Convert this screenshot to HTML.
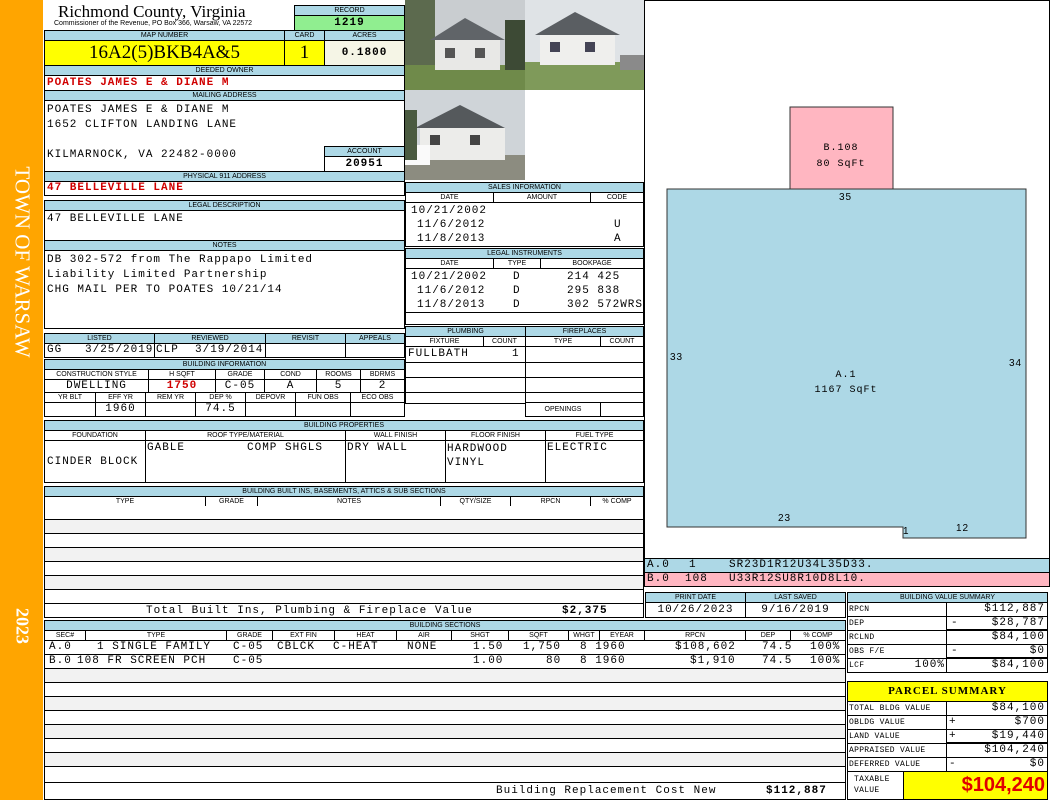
<!DOCTYPE html>
<html><head><meta charset="utf-8">
<style>
*{margin:0;padding:0}
body{width:1050px;height:800px;position:relative;background:#fff;overflow:hidden;font-family:"Liberation Mono",monospace;font-size:11px;letter-spacing:1px;color:#000}
.a{position:absolute;box-sizing:border-box}
.h{position:absolute;box-sizing:border-box;background:#add8e6;border:1px solid #000;font:7px/9px "Liberation Sans",sans-serif;letter-spacing:0;text-align:center;overflow:hidden;white-space:nowrap}
.c{position:absolute;box-sizing:border-box;border:1px solid #000;background:#fff;overflow:hidden;white-space:nowrap}
.ch{position:absolute;box-sizing:border-box;border:1px solid #000;background:#fff;font:7px/9px "Liberation Sans",sans-serif;letter-spacing:0;text-align:center;overflow:hidden;white-space:nowrap}
.r{color:#d00000;font-weight:bold}
.ce{text-align:center}.rt{text-align:right;padding-right:2px}
.row{position:absolute;box-sizing:border-box;border:1px solid #000;border-top:none;background:#fff}
.sm{font-size:8px;letter-spacing:0.3px;line-height:13px;padding-left:1px}
s{text-decoration:none;position:absolute}
</style></head><body>
<div class="a" style="left:0;top:0;width:43px;height:800px;background:#ffa500"></div>
<div class="a" style="left:22px;top:262px;width:0;height:0"><div style="position:absolute;transform:translate(-50%,-50%) rotate(90deg);font:21px 'Liberation Serif',serif;letter-spacing:0;color:#fff;white-space:nowrap">TOWN OF WARSAW</div></div>
<div class="a" style="left:22px;top:626px;width:0;height:0"><div style="position:absolute;transform:translate(-50%,-50%) rotate(90deg);font:bold 18px 'Liberation Serif',serif;letter-spacing:0;color:#fff;white-space:nowrap">2023</div></div>

<div class="a" style="left:58px;top:2px;font:17px 'Liberation Serif',serif;letter-spacing:0">Richmond County, Virginia</div>
<div class="a" style="left:54px;top:20px;font:7px 'Liberation Sans',sans-serif;letter-spacing:0">Commissioner of the Revenue, PO Box 366, Warsaw, VA 22572</div>
<div class="h" style="left:294px;top:5px;width:111px;height:11px">RECORD</div>
<div class="c ce" style="left:294px;top:15px;width:111px;height:16px;background:#90ee90;font-weight:bold;line-height:14px">1219</div>
<div class="h" style="left:44px;top:30px;width:241px;height:11px">MAP NUMBER</div>
<div class="h" style="left:284px;top:30px;width:41px;height:11px">CARD</div>
<div class="h" style="left:324px;top:30px;width:81px;height:11px">ACRES</div>
<div class="c ce" style="left:44px;top:40px;width:241px;height:26px;background:#ffff00;font:19px/24px 'Liberation Serif',serif;letter-spacing:0">16A2(5)BKB4A&amp;5</div>
<div class="c ce" style="left:284px;top:40px;width:41px;height:26px;background:#ffff00;font:19px/24px 'Liberation Serif',serif;letter-spacing:0">1</div>
<div class="c ce" style="left:324px;top:40px;width:81px;height:26px;background:#f5f5e6;font-weight:bold;line-height:24px">0.1800</div>
<div class="h" style="left:44px;top:65px;width:361px;height:11px">DEEDED OWNER</div>
<div class="c r" style="left:44px;top:75px;width:361px;height:16px;padding-left:2px;line-height:14px">POATES JAMES E &amp; DIANE M</div>
<div class="h" style="left:44px;top:90px;width:361px;height:11px">MAILING ADDRESS</div>
<div class="c" style="left:44px;top:100px;width:361px;height:72px;padding:2px 0 0 2px;line-height:15px">POATES JAMES E &amp; DIANE M<br>1652 CLIFTON LANDING LANE<br><br>KILMARNOCK, VA 22482-0000</div>
<div class="h" style="left:324px;top:146px;width:81px;height:11px">ACCOUNT</div>
<div class="c ce" style="left:324px;top:156px;width:81px;height:16px;font-weight:bold;line-height:14px">20951</div>
<div class="h" style="left:44px;top:171px;width:361px;height:11px">PHYSICAL 911 ADDRESS</div>
<div class="c r" style="left:44px;top:181px;width:361px;height:15px;padding-left:2px;line-height:13px">47 BELLEVILLE LANE</div>
<div class="h" style="left:44px;top:200px;width:361px;height:11px">LEGAL DESCRIPTION</div>
<div class="c" style="left:44px;top:210px;width:361px;height:31px;padding:2px 0 0 2px">47 BELLEVILLE LANE</div>
<div class="h" style="left:44px;top:240px;width:361px;height:11px">NOTES</div>
<div class="c" style="left:44px;top:250px;width:361px;height:79px;padding:2px 0 0 2px;line-height:15px">DB 302-572 from The Rappapo Limited<br>Liability Limited Partnership<br>CHG MAIL PER TO POATES 10/21/14</div>

<div class="h" style="left:44px;top:333px;width:111px;height:11px">LISTED</div>
<div class="h" style="left:154px;top:333px;width:112px;height:11px">REVIEWED</div>
<div class="h" style="left:265px;top:333px;width:81px;height:11px">REVISIT</div>
<div class="h" style="left:345px;top:333px;width:60px;height:11px">APPEALS</div>
<div class="c" style="left:44px;top:343px;width:111px;height:15px;line-height:13px"><s style="left:2px">GG</s><s style="left:40px">3/25/2019</s></div>
<div class="c" style="left:154px;top:343px;width:112px;height:15px;line-height:13px"><s style="left:1px">CLP</s><s style="left:40px">3/19/2014</s></div>
<div class="c" style="left:265px;top:343px;width:81px;height:15px"></div>
<div class="c" style="left:345px;top:343px;width:60px;height:15px"></div>

<div class="h" style="left:44px;top:359px;width:361px;height:11px">BUILDING INFORMATION</div>
<div class="ch" style="left:44px;top:369px;width:105px;height:11px">CONSTRUCTION STYLE</div>
<div class="ch" style="left:148px;top:369px;width:68px;height:11px">H SQFT</div>
<div class="ch" style="left:215px;top:369px;width:50px;height:11px">GRADE</div>
<div class="ch" style="left:264px;top:369px;width:53px;height:11px">COND</div>
<div class="ch" style="left:316px;top:369px;width:45px;height:11px">ROOMS</div>
<div class="ch" style="left:360px;top:369px;width:45px;height:11px">BDRMS</div>
<div class="c ce" style="left:44px;top:379px;width:105px;height:14px;line-height:12px">DWELLING</div>
<div class="c ce r" style="left:148px;top:379px;width:68px;height:14px;line-height:12px">1750</div>
<div class="c ce" style="left:215px;top:379px;width:50px;height:14px;line-height:12px">C-05</div>
<div class="c ce" style="left:264px;top:379px;width:53px;height:14px;line-height:12px">A</div>
<div class="c ce" style="left:316px;top:379px;width:45px;height:14px;line-height:12px">5</div>
<div class="c ce" style="left:360px;top:379px;width:45px;height:14px;line-height:12px">2</div>
<div class="ch" style="left:44px;top:392px;width:52px;height:11px">YR BLT</div>
<div class="ch" style="left:95px;top:392px;width:51px;height:11px">EFF YR</div>
<div class="ch" style="left:145px;top:392px;width:51px;height:11px">REM YR</div>
<div class="ch" style="left:195px;top:392px;width:51px;height:11px">DEP %</div>
<div class="ch" style="left:245px;top:392px;width:51px;height:11px">DEPOVR</div>
<div class="ch" style="left:295px;top:392px;width:56px;height:11px">FUN OBS</div>
<div class="ch" style="left:350px;top:392px;width:55px;height:11px">ECO OBS</div>
<div class="c" style="left:44px;top:402px;width:52px;height:15px"></div>
<div class="c ce" style="left:95px;top:402px;width:51px;height:15px;line-height:13px">1960</div>
<div class="c" style="left:145px;top:402px;width:51px;height:15px"></div>
<div class="c ce" style="left:195px;top:402px;width:51px;height:15px;line-height:13px">74.5</div>
<div class="c" style="left:245px;top:402px;width:51px;height:15px"></div>
<div class="c" style="left:295px;top:402px;width:56px;height:15px"></div>
<div class="c" style="left:350px;top:402px;width:55px;height:15px"></div>

<svg class="a" style="left:405px;top:0" width="240" height="180">
<g><rect x="0" y="0" width="120" height="90" fill="#c9cdd0"/><rect x="0" y="0" width="30" height="70" fill="#5c6a4e"/><rect x="0" y="65" width="120" height="25" fill="#6f8a4a"/><polygon points="25,40 60,18 100,40" fill="#606468"/><rect x="30" y="40" width="65" height="30" fill="#e8e8e6"/><rect x="40" y="48" width="10" height="10" fill="#555"/><rect x="70" y="48" width="10" height="10" fill="#555"/><rect x="100" y="20" width="20" height="50" fill="#3d4a35"/></g>
<g transform="translate(120,0)"><rect width="120" height="90" fill="#dfe3e6"/><rect y="62" width="120" height="28" fill="#7f9a5a"/><polygon points="10,35 50,12 95,35" fill="#5a5e62"/><rect x="15" y="35" width="75" height="30" fill="#efefed"/><rect x="25" y="42" width="10" height="10" fill="#445"/><rect x="60" y="42" width="10" height="10" fill="#445"/><rect x="95" y="55" width="25" height="15" fill="#8a8a8a"/></g>
<g transform="translate(0,90)"><rect width="120" height="90" fill="#cfd4d8"/><rect y="65" width="120" height="25" fill="#8c8c80"/><polygon points="10,38 55,15 100,38" fill="#55595c"/><rect x="15" y="38" width="85" height="32" fill="#ececea"/><rect x="25" y="45" width="10" height="10" fill="#444"/><rect x="65" y="45" width="10" height="10" fill="#444"/><rect x="0" y="55" width="25" height="20" fill="#fafafa"/><rect x="0" y="20" width="12" height="50" fill="#4a5a40"/></g>
</svg>

<div class="h" style="left:405px;top:182px;width:239px;height:11px">SALES INFORMATION</div>
<div class="ch" style="left:405px;top:192px;width:89px;height:11px">DATE</div>
<div class="ch" style="left:493px;top:192px;width:98px;height:11px">AMOUNT</div>
<div class="ch" style="left:590px;top:192px;width:54px;height:11px">CODE</div>
<div class="c" style="left:405px;top:202px;width:239px;height:45px;line-height:14px">
<s style="left:5px;top:1px">10/21/2002</s>
<s style="left:11px;top:15px">11/6/2012</s><s style="left:208px;top:15px">U</s>
<s style="left:11px;top:29px">11/8/2013</s><s style="left:208px;top:29px">A</s></div>
<div class="h" style="left:405px;top:248px;width:239px;height:11px">LEGAL INSTRUMENTS</div>
<div class="ch" style="left:405px;top:258px;width:89px;height:11px">DATE</div>
<div class="ch" style="left:493px;top:258px;width:48px;height:11px">TYPE</div>
<div class="ch" style="left:540px;top:258px;width:104px;height:11px">BOOKPAGE</div>
<div class="c" style="left:405px;top:268px;width:239px;height:45px;line-height:14px">
<s style="left:5px;top:1px">10/21/2002</s><s style="left:107px;top:1px">D</s><s style="left:161px;top:1px">214 425</s>
<s style="left:11px;top:15px">11/6/2012</s><s style="left:107px;top:15px">D</s><s style="left:161px;top:15px">295 838</s>
<s style="left:11px;top:29px">11/8/2013</s><s style="left:107px;top:29px">D</s><s style="left:161px;top:29px">302 572WRS</s></div>
<div class="c" style="left:405px;top:312px;width:239px;height:13px"></div>

<div class="h" style="left:405px;top:326px;width:121px;height:11px">PLUMBING</div>
<div class="h" style="left:525px;top:326px;width:119px;height:11px">FIREPLACES</div>
<div class="ch" style="left:405px;top:336px;width:79px;height:11px">FIXTURE</div>
<div class="ch" style="left:483px;top:336px;width:43px;height:11px">COUNT</div>
<div class="ch" style="left:525px;top:336px;width:76px;height:11px">TYPE</div>
<div class="ch" style="left:600px;top:336px;width:44px;height:11px">COUNT</div>
<div class="c" style="left:405px;top:346px;width:121px;height:17px;line-height:15px"><s style="left:2px">FULLBATH</s><s style="left:106px">1</s></div>
<div class="c" style="left:405px;top:362px;width:121px;height:16px"></div>
<div class="c" style="left:405px;top:377px;width:121px;height:16px"></div>
<div class="c" style="left:405px;top:392px;width:121px;height:12px"></div>
<div class="c" style="left:525px;top:346px;width:119px;height:17px"></div>
<div class="c" style="left:525px;top:362px;width:119px;height:16px"></div>
<div class="c" style="left:525px;top:377px;width:119px;height:16px"></div>
<div class="c" style="left:525px;top:392px;width:119px;height:11px"></div>
<div class="ch" style="left:525px;top:402px;width:76px;height:15px;line-height:13px">OPENINGS</div>
<div class="c" style="left:600px;top:402px;width:44px;height:15px"></div>

<div class="h" style="left:44px;top:420px;width:600px;height:11px">BUILDING PROPERTIES</div>
<div class="ch" style="left:44px;top:430px;width:102px;height:11px">FOUNDATION</div>
<div class="ch" style="left:145px;top:430px;width:201px;height:11px">ROOF TYPE/MATERIAL</div>
<div class="ch" style="left:345px;top:430px;width:101px;height:11px">WALL FINISH</div>
<div class="ch" style="left:445px;top:430px;width:101px;height:11px">FLOOR FINISH</div>
<div class="ch" style="left:545px;top:430px;width:99px;height:11px">FUEL TYPE</div>
<div class="c" style="left:44px;top:440px;width:102px;height:43px;padding:15px 0 0 2px">CINDER BLOCK</div>
<div class="c" style="left:145px;top:440px;width:201px;height:43px"><s style="left:1px;top:1px">GABLE</s><s style="left:101px;top:1px">COMP SHGLS</s></div>
<div class="c" style="left:345px;top:440px;width:101px;height:43px;padding:1px 0 0 1px">DRY WALL</div>
<div class="c" style="left:445px;top:440px;width:101px;height:43px;padding:1px 0 0 1px;line-height:14px">HARDWOOD<br>VINYL</div>
<div class="c" style="left:545px;top:440px;width:99px;height:43px;padding:1px 0 0 1px">ELECTRIC</div>

<div class="h" style="left:44px;top:486px;width:600px;height:11px">BUILDING BUILT INS, BASEMENTS, ATTICS &amp; SUB SECTIONS</div>
<div class="ch" style="left:44px;top:496px;width:162px;height:11px">TYPE</div>
<div class="ch" style="left:205px;top:496px;width:53px;height:11px">GRADE</div>
<div class="ch" style="left:257px;top:496px;width:184px;height:11px">NOTES</div>
<div class="ch" style="left:440px;top:496px;width:71px;height:11px">QTY/SIZE</div>
<div class="ch" style="left:510px;top:496px;width:81px;height:11px">RPCN</div>
<div class="ch" style="left:590px;top:496px;width:54px;height:11px">% COMP</div>
<div class="row" style="left:44px;top:506px;width:600px;height:14px"></div>
<div class="row" style="left:44px;top:520px;width:600px;height:14px;background:#f2f2f2"></div>
<div class="row" style="left:44px;top:534px;width:600px;height:14px"></div>
<div class="row" style="left:44px;top:548px;width:600px;height:14px;background:#f2f2f2"></div>
<div class="row" style="left:44px;top:562px;width:600px;height:14px"></div>
<div class="row" style="left:44px;top:576px;width:600px;height:14px;background:#f2f2f2"></div>
<div class="row" style="left:44px;top:590px;width:600px;height:14px"></div>
<div class="c" style="left:44px;top:603px;width:600px;height:15px;line-height:14px"><s style="left:101px">Total Built Ins, Plumbing &amp; Fireplace Value</s><s style="left:517px;font-weight:bold">$2,375</s></div>

<div class="h" style="left:645px;top:592px;width:101px;height:11px">PRINT DATE</div>
<div class="h" style="left:745px;top:592px;width:101px;height:11px">LAST SAVED</div>
<div class="c ce" style="left:645px;top:602px;width:101px;height:16px;line-height:14px">10/26/2023</div>
<div class="c ce" style="left:745px;top:602px;width:101px;height:16px;line-height:14px">9/16/2019</div>

<div class="h" style="left:44px;top:620px;width:802px;height:11px">BUILDING SECTIONS</div>
<div class="ch" style="left:44px;top:630px;width:42px;height:11px">SEC#</div>
<div class="ch" style="left:85px;top:630px;width:142px;height:11px">TYPE</div>
<div class="ch" style="left:226px;top:630px;width:47px;height:11px">GRADE</div>
<div class="ch" style="left:272px;top:630px;width:63px;height:11px">EXT FIN</div>
<div class="ch" style="left:334px;top:630px;width:63px;height:11px">HEAT</div>
<div class="ch" style="left:396px;top:630px;width:56px;height:11px">AIR</div>
<div class="ch" style="left:451px;top:630px;width:58px;height:11px">SHGT</div>
<div class="ch" style="left:508px;top:630px;width:61px;height:11px">SQFT</div>
<div class="ch" style="left:568px;top:630px;width:32px;height:11px">WHGT</div>
<div class="ch" style="left:599px;top:630px;width:46px;height:11px">EYEAR</div>
<div class="ch" style="left:644px;top:630px;width:102px;height:11px">RPCN</div>
<div class="ch" style="left:745px;top:630px;width:46px;height:11px">DEP</div>
<div class="ch" style="left:790px;top:630px;width:56px;height:11px">% COMP</div>
<div class="row" style="left:44px;top:641px;width:802px;height:14px;white-space:pre;line-height:13px"><s style="left:4px">A.0</s><s style="left:52px">1 SINGLE FAMILY</s><s style="left:188px">C-05</s><s style="left:232px">CBLCK</s><s style="left:288px">C-HEAT</s><s style="left:362px">NONE</s><s style="left:428px">1.50</s><s style="left:478px">1,750</s><s style="left:535px">8 1960</s><s style="left:630px">$108,602</s><s style="left:717px">74.5</s><s style="left:765px">100%</s></div>
<div class="row" style="left:44px;top:655px;width:802px;height:14px;white-space:pre;line-height:13px"><s style="left:4px">B.0</s><s style="left:32px">108 FR SCREEN PCH</s><s style="left:188px">C-05</s><s style="left:428px">1.00</s><s style="left:501px">80</s><s style="left:535px">8 1960</s><s style="left:645px">$1,910</s><s style="left:717px">74.5</s><s style="left:765px">100%</s></div>
<div class="row" style="left:44px;top:669px;width:802px;height:14px;background:#f2f2f2"></div>
<div class="row" style="left:44px;top:683px;width:802px;height:14px"></div>
<div class="row" style="left:44px;top:697px;width:802px;height:14px;background:#f2f2f2"></div>
<div class="row" style="left:44px;top:711px;width:802px;height:14px"></div>
<div class="row" style="left:44px;top:725px;width:802px;height:14px;background:#f2f2f2"></div>
<div class="row" style="left:44px;top:739px;width:802px;height:14px"></div>
<div class="row" style="left:44px;top:753px;width:802px;height:14px;background:#f2f2f2"></div>
<div class="row" style="left:44px;top:767px;width:802px;height:16px"></div>
<div class="c" style="left:44px;top:782px;width:802px;height:18px;line-height:17px"><s style="left:451px">Building Replacement Cost New</s><s style="left:721px;font-weight:bold">$112,887</s></div>

<div class="c" style="left:644px;top:0;width:406px;height:559px"></div>
<svg class="a" style="left:645px;top:0" width="404" height="558">
<rect x="145" y="107" width="103" height="82" fill="#ffb6c1" stroke="#333" stroke-width="1"/>
<polygon points="22,189 381,189 381,538 258,538 258,527 22,527" fill="#add8e6" stroke="#333" stroke-width="1"/>
<text x="196" y="150" font-family="Liberation Mono" font-size="10" text-anchor="middle">B.108</text>
<text x="196" y="166" font-family="Liberation Mono" font-size="10" text-anchor="middle">80 SqFt</text>
<text x="201" y="377" font-family="Liberation Mono" font-size="10" text-anchor="middle">A.1</text>
<text x="201" y="392" font-family="Liberation Mono" font-size="10" text-anchor="middle">1167 SqFt</text>
<g font-family="Liberation Sans" font-size="10">
<text x="194" y="200">35</text><text x="25" y="360">33</text><text x="364" y="366">34</text>
<text x="133" y="521">23</text><text x="258" y="534">1</text><text x="311" y="531">12</text></g>
</svg>
<div class="c" style="left:644px;top:558px;width:406px;height:15px;background:#add8e6;line-height:13px"><s style="left:2px">A.0</s><s style="left:44px">1</s><s style="left:84px">SR23D1R12U34L35D33.</s></div>
<div class="c" style="left:644px;top:572px;width:406px;height:15px;background:#ffb6c1;line-height:13px"><s style="left:2px">B.0</s><s style="left:40px">108</s><s style="left:84px">U33R12SU8R10D8L10.</s></div>

<div class="h" style="left:847px;top:592px;width:201px;height:11px">BUILDING VALUE SUMMARY</div>
<div class="c sm" style="left:847px;top:602px;width:100px;height:15px">RPCN</div>
<div class="c rt" style="left:946px;top:602px;width:102px;height:15px;line-height:13px">$112,887</div>
<div class="c sm" style="left:847px;top:616px;width:100px;height:15px">DEP</div>
<div class="c rt" style="left:946px;top:616px;width:102px;height:15px;line-height:13px;border-bottom:2px solid #000"><span style="float:left;padding-left:4px">-</span>$28,787</div>
<div class="c sm" style="left:847px;top:630px;width:100px;height:15px">RCLND</div>
<div class="c rt" style="left:946px;top:630px;width:102px;height:15px;line-height:13px">$84,100</div>
<div class="c sm" style="left:847px;top:644px;width:100px;height:15px">OBS F/E</div>
<div class="c rt" style="left:946px;top:644px;width:102px;height:15px;line-height:13px;border-bottom:2px solid #000"><span style="float:left;padding-left:4px">-</span>$0</div>
<div class="c sm" style="left:847px;top:658px;width:100px;height:15px">LCF<span style="float:right;font-size:11px;letter-spacing:1px;padding-right:1px">100%</span></div>
<div class="c rt" style="left:946px;top:658px;width:102px;height:15px;line-height:13px">$84,100</div>

<div class="c ce" style="left:847px;top:681px;width:201px;height:21px;background:#ffff00;font-weight:bold;font-size:11px;line-height:19px;font-family:'Liberation Serif',serif;letter-spacing:1px">PARCEL SUMMARY</div>
<div class="c sm" style="left:847px;top:701px;width:100px;height:15px">TOTAL BLDG VALUE</div>
<div class="c rt" style="left:946px;top:701px;width:102px;height:15px;line-height:13px">$84,100</div>
<div class="c sm" style="left:847px;top:715px;width:100px;height:15px">OBLDG VALUE</div>
<div class="c rt" style="left:946px;top:715px;width:102px;height:15px;line-height:13px"><span style="float:left;padding-left:2px">+</span>$700</div>
<div class="c sm" style="left:847px;top:729px;width:100px;height:15px">LAND VALUE</div>
<div class="c rt" style="left:946px;top:729px;width:102px;height:15px;line-height:13px;border-bottom:2px solid #000"><span style="float:left;padding-left:2px">+</span>$19,440</div>
<div class="c sm" style="left:847px;top:743px;width:100px;height:15px">APPRAISED VALUE</div>
<div class="c rt" style="left:946px;top:743px;width:102px;height:15px;line-height:13px">$104,240</div>
<div class="c sm" style="left:847px;top:757px;width:100px;height:15px">DEFERRED VALUE</div>
<div class="c rt" style="left:946px;top:757px;width:102px;height:15px;line-height:13px"><span style="float:left;padding-left:2px">-</span>$0</div>
<div class="c" style="left:847px;top:771px;width:57px;height:29px;font-size:8px;letter-spacing:0.3px;line-height:11px;padding:2px 0 0 6px">TAXABLE<br>VALUE</div>
<div class="c rt" style="left:903px;top:771px;width:145px;height:29px;background:#ffff00;color:#e00000;font:bold 20px/27px 'Liberation Sans',sans-serif;letter-spacing:0;padding-right:2px">$104,240</div>
</body></html>
